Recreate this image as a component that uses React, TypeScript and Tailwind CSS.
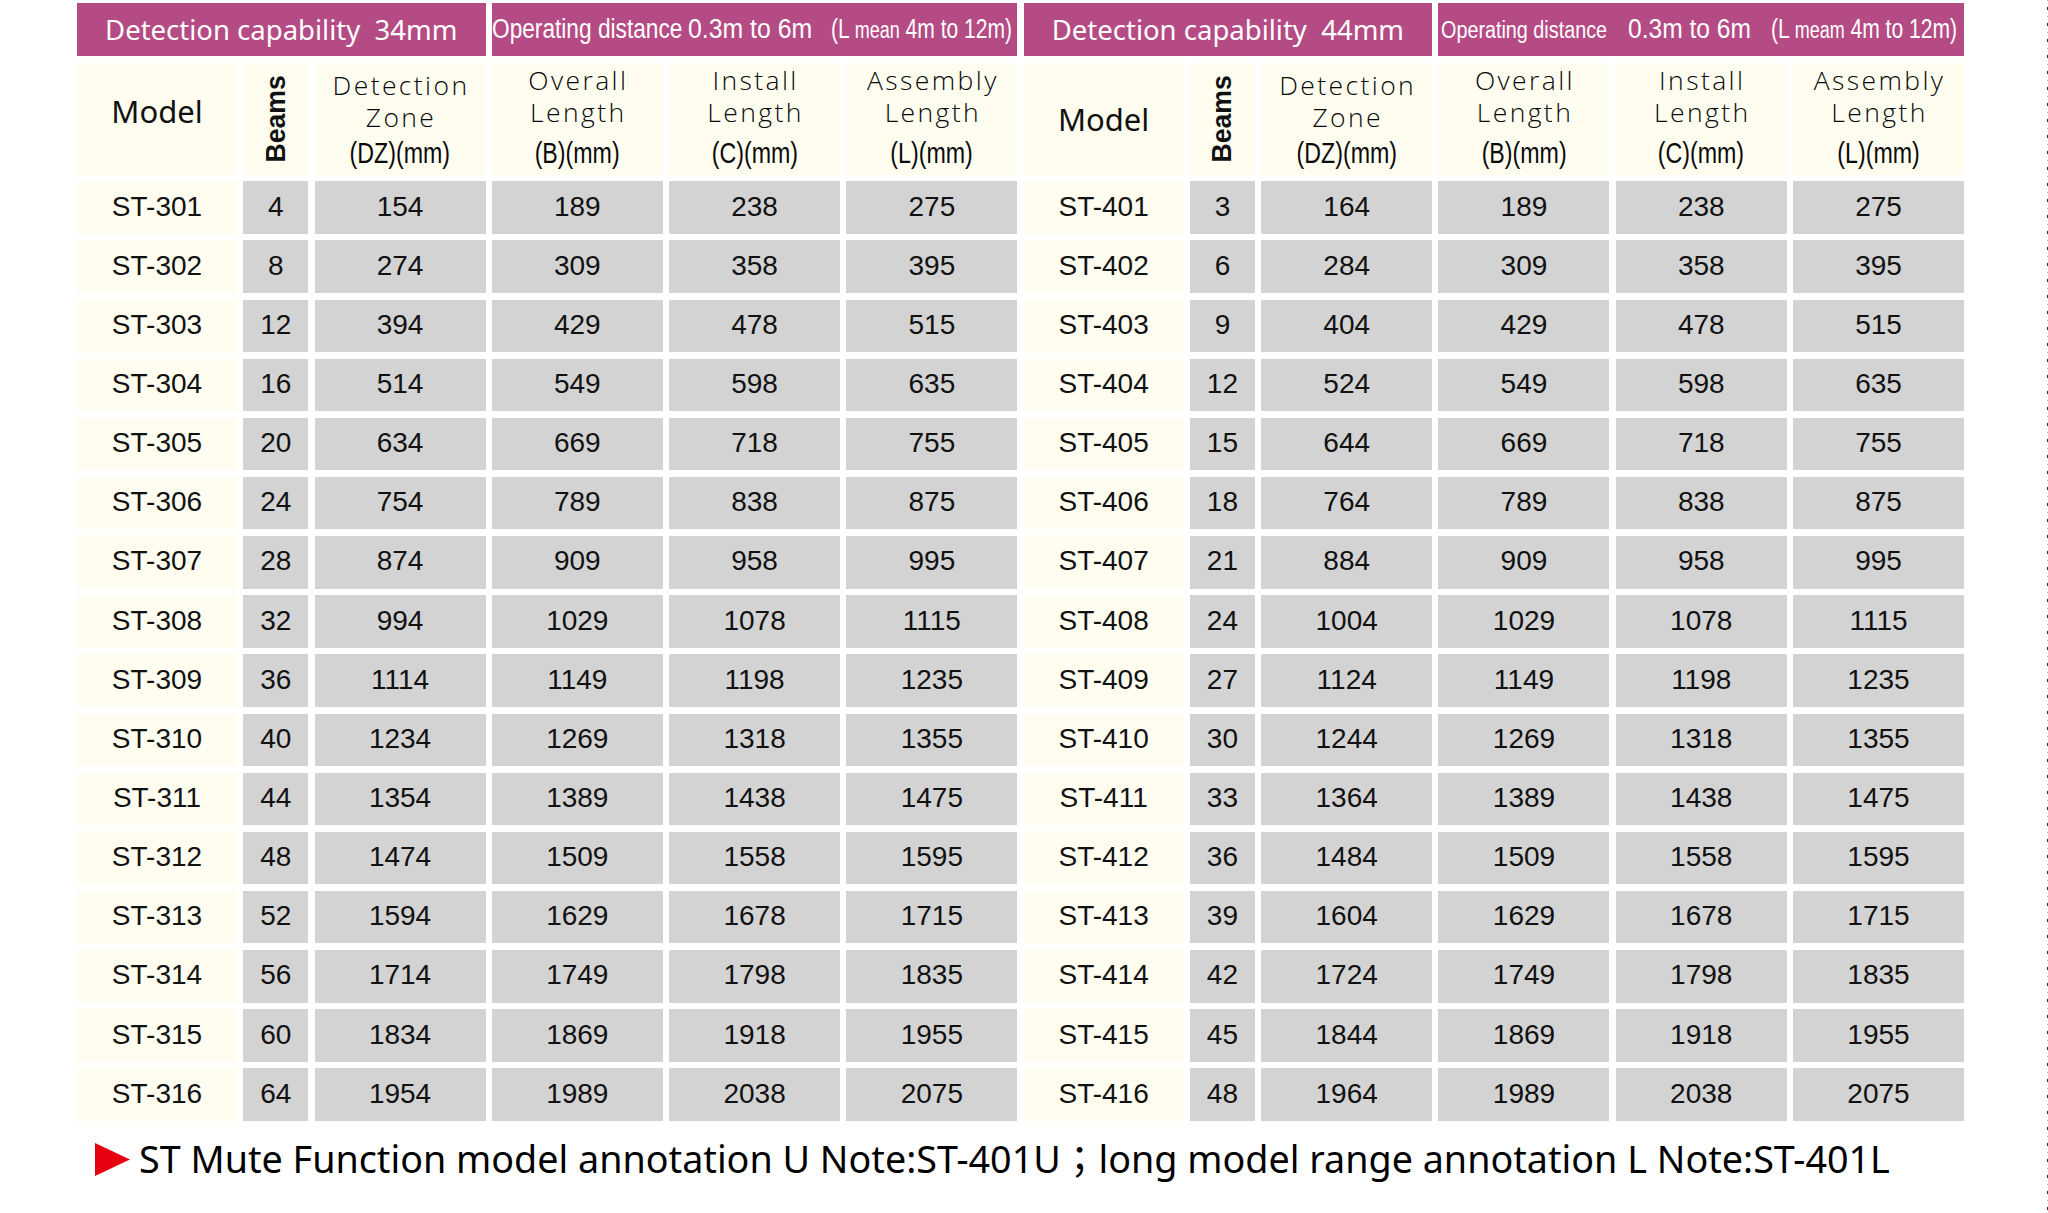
import React from "react";

type SegProps = { w: string; s: string; children: React.ReactNode };

function Seg({ w, s, children }: SegProps) {
  return (
    <span className={"inline-block shrink-0 " + w}>
      <span className={"inline-block origin-left whitespace-nowrap " + s}>{children}</span>
    </span>
  );
}

type HeadProps = { l1: string; l2: string; unit: string; dz?: boolean };

function HeadCell({ l1, l2, unit, dz }: HeadProps) {
  return (
    <div
      className={
        dz
          ? "bg-[#fefdf0] flex flex-col items-center pt-[6px] text-[#0a0a0a]"
          : "bg-[#fefdf0] flex flex-col items-center pt-[1px] text-[#0a0a0a]"
      }
    >
      <div className="h-[32px] leading-[32px] font-['Open_Sans','Noto_Sans',sans-serif] font-light text-[26.5px] tracking-[2.4px] pl-[2px]">
        {l1}
      </div>
      <div className="h-[32px] leading-[32px] font-['Open_Sans','Noto_Sans',sans-serif] font-light text-[26.5px] tracking-[2.4px] pl-[2px]">
        {l2}
      </div>
      <div
        className={
          dz
            ? "mt-[2px] h-[36px] leading-[36px] text-[29px] font-['Liberation_Sans',Arial,sans-serif] scale-x-[0.8] whitespace-nowrap"
            : "mt-[7px] h-[36px] leading-[36px] text-[29px] font-['Liberation_Sans',Arial,sans-serif] scale-x-[0.8] whitespace-nowrap"
        }
      >
        {unit}
      </div>
    </div>
  );
}

function ModelHead({ right }: { right?: boolean }) {
  return (
    <div
      className={
        right
          ? "bg-[#fefdf0] flex items-center justify-center pt-[2px] text-[31px] text-[#111] font-['Noto_Sans','Open_Sans',sans-serif]"
          : "bg-[#fefdf0] flex items-center justify-center pb-[14px] text-[31px] text-[#111] font-['Noto_Sans','Open_Sans',sans-serif]"
      }
    >
      Model
    </div>
  );
}

function BeamsHead() {
  return (
    <div className="bg-[#fefdf0] flex items-center justify-center">
      <span className="[writing-mode:vertical-rl] rotate-180 scale-y-[0.95] font-bold text-[28px] leading-none text-[#111] font-['Liberation_Sans',Arial,sans-serif]">
        Beams
      </span>
    </div>
  );
}

function Cell({ v, cream }: { v: string | number; cream?: boolean }) {
  return (
    <div
      className={
        cream
          ? "bg-[#fefdf0] flex items-center justify-center pb-[2px] text-[28px] text-[#111] font-['Liberation_Sans',Arial,sans-serif]"
          : "bg-[#d3d3d3] flex items-center justify-center pb-[2px] text-[28px] text-[#111] font-['Liberation_Sans',Arial,sans-serif]"
      }
    >
      {v}
    </div>
  );
}

const rows = Array.from({ length: 16 }, (_, i) => {
  const n = String(i + 1).padStart(2, "0");
  const add = 120 * i;
  return {
    lm: "ST-3" + n,
    lb: 4 * (i + 1),
    ldz: 154 + add,
    rm: "ST-4" + n,
    rb: 3 * (i + 1),
    rdz: 164 + add,
    ov: 189 + add,
    ins: 238 + add,
    asm: 275 + add,
  };
});

export default function App() {
  return (
    <div className="relative w-[2048px] h-[1213px] bg-white overflow-hidden">
      <div className="pl-[77px] pt-[3px]">
        <div className="grid w-[1887px] grid-cols-[160fr_65fr_171fr_171fr_171fr_171fr_160fr_65fr_171fr_171fr_171fr_171fr] grid-rows-[53px_112px_repeat(16,52.5px)] gap-x-[6.3px] gap-y-[6.65px]">
          {/* top bars */}
          <div className="col-span-3 bg-[#b54b84] flex items-center justify-center text-white text-[27.5px] whitespace-pre font-['Noto_Sans','Open_Sans',sans-serif]">
            Detection capability  34mm
          </div>
          <div className="col-span-3 bg-[#b54b84] flex items-center pb-[1px] text-white text-[27px] font-['Liberation_Sans',Arial,sans-serif] overflow-hidden">
            <Seg w="w-[190px]" s="scale-x-[0.84]">Operating distance</Seg>
            <span className="w-[6px] shrink-0" />
            <Seg w="w-[124px]" s="scale-x-[0.92]">0.3m to 6m</Seg>
            <span className="w-[19px] shrink-0" />
            <Seg w="w-[181px]" s="scale-x-[0.78]">
              (L <span className="text-[23px]">mean</span> 4m to 12m)
            </Seg>
          </div>
          <div className="col-span-3 bg-[#b54b84] flex items-center justify-center text-white text-[27.5px] whitespace-pre font-['Noto_Sans','Open_Sans',sans-serif]">
            Detection capability  44mm
          </div>
          <div className="col-span-3 bg-[#b54b84] flex items-center pl-[3px] pb-[1px] text-white text-[27px] font-['Liberation_Sans',Arial,sans-serif] overflow-hidden">
            <Seg w="w-[166px]" s="scale-x-[0.86] text-[23px]">Operating distance</Seg>
            <span className="w-[21px] shrink-0" />
            <Seg w="w-[123px]" s="scale-x-[0.91]">0.3m to 6m</Seg>
            <span className="w-[20px] shrink-0" />
            <Seg w="w-[186px]" s="scale-x-[0.78]">
              (L <span className="text-[23px]">meam</span> 4m to 12m)
            </Seg>
          </div>

          {/* column headers */}
          <ModelHead />
          <BeamsHead />
          <HeadCell l1="Detection" l2="Zone" unit="(DZ)(mm)" dz />
          <HeadCell l1="Overall" l2="Length" unit="(B)(mm)" />
          <HeadCell l1="Install" l2="Length" unit="(C)(mm)" />
          <HeadCell l1="Assembly" l2="Length" unit="(L)(mm)" />
          <ModelHead right />
          <BeamsHead />
          <HeadCell l1="Detection" l2="Zone" unit="(DZ)(mm)" dz />
          <HeadCell l1="Overall" l2="Length" unit="(B)(mm)" />
          <HeadCell l1="Install" l2="Length" unit="(C)(mm)" />
          <HeadCell l1="Assembly" l2="Length" unit="(L)(mm)" />

          {/* data rows */}
          {rows.map((r) => (
            <React.Fragment key={r.lm}>
              <Cell v={r.lm} cream />
              <Cell v={r.lb} />
              <Cell v={r.ldz} />
              <Cell v={r.ov} />
              <Cell v={r.ins} />
              <Cell v={r.asm} />
              <Cell v={r.rm} cream />
              <Cell v={r.rb} />
              <Cell v={r.rdz} />
              <Cell v={r.ov} />
              <Cell v={r.ins} />
              <Cell v={r.asm} />
            </React.Fragment>
          ))}
        </div>

        {/* footnote */}
        <div className="mt-[10px] pl-[18px] flex items-center gap-[9px]">
          <svg width="35" height="33" viewBox="0 0 35 33" className="shrink-0">
            <polygon points="0,0 35,16.5 0,33" fill="#e60012" />
          </svg>
          <span className="text-[37.7px] text-black whitespace-nowrap font-['Noto_Sans','Open_Sans','Noto_Sans_CJK_TC',sans-serif]">
            ST Mute Function model annotation U Note:ST-401U；long model range annotation L Note:ST-401L
          </span>
        </div>
      </div>

      {/* page edge dotted guide */}
      <div className="absolute right-0 top-0 h-full w-px bg-[repeating-linear-gradient(to_bottom,#c0c0c0_0px,#c0c0c0_1px,transparent_1px,transparent_7px,#7a1010_7px,#7a1010_10px,transparent_10px,transparent_16px)]" />
    </div>
  );
}
